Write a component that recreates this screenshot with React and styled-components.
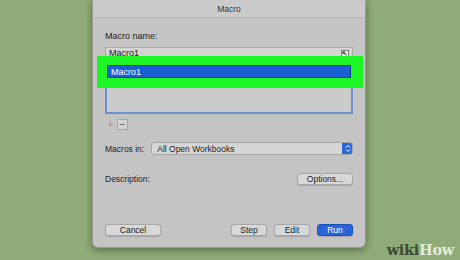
import styled, { createGlobalStyle } from 'styled-components';

const GlobalStyle = createGlobalStyle`
	html, body {
		margin: 0;
		padding: 0;
		width: 460px;
		height: 260px;
		overflow: hidden;
		background-color: #8fab77;
		font-family: "Liberation Sans", Arial, sans-serif;
	}
`;

const Page = styled.div`
	position: relative;
	width: 460px;
	height: 260px;
	display: flex;
	align-items: flex-start;
	padding-left: 92px;
	box-sizing: border-box;
`;

const Dialog = styled.div`
	width: 274px;
	height: 248px;
	background-color: #c4c4c4;
	border: 1px solid #9a9a9a;
	border-top: 0;
	border-radius: 0 0 6px 6px;
	box-shadow: 0 2px 7px rgba(20, 30, 10, 0.45);
	display: flex;
	flex-direction: column;
	box-sizing: border-box;
	color: #1e1e1e;
	font-size: 8.5px;
`;

const TitleBar = styled.div`
	height: 17px;
	background-color: #cbcbcb;
	border-bottom: 1px solid #b0b0b0;
	display: flex;
	align-items: center;
	justify-content: center;
	color: #333;
	font-size: 8.5px;
`;

const Body = styled.div`
	flex: 1;
	display: flex;
	flex-direction: column;
	padding: 0 12px 0 12px;
`;

const Label = styled.div`
	margin-top: ${props => props.top || 0}px;
	line-height: 10px;
	font-size: 9px;
`;

const Input = styled.div`
	margin-top: 6px;
	height: 12px;
	background-color: #d4d4d4;
	border: 1px solid #a9a9a9;
	box-sizing: border-box;
	display: flex;
	align-items: center;
	justify-content: space-between;
	padding: 0 3px;
	line-height: 10px;
	font-size: 9px;
`;

const ListBox = styled.div`
	position: relative;
	height: 55px;
	background-color: #cbcbcb;
	border: 2px solid #6f8fcf;
	border-top: 0;
	box-sizing: border-box;
`;

const Highlight = styled.div`
	position: absolute;
	left: -10px;
	right: -12px;
	top: -3px;
	height: 32px;
	background-color: #1ef524;
	padding: 9px 12px 9px 10px;
	box-sizing: border-box;
`;

const SelectedRow = styled.div`
	height: 13px;
	background-color: #1b5fd4;
	border: 1px solid #0f3f9a;
	color: #fff;
	display: flex;
	align-items: center;
	padding-left: 3px;
	box-sizing: border-box;
	font-size: 9px;
`;

const AddRemove = styled.div`
	display: flex;
	margin-top: 5px;
	gap: 1px;
`;

const SmallBtn = styled.div`
	width: 11px;
	height: 11px;
	display: flex;
	align-items: center;
	justify-content: center;
	color: ${props => props.disabled ? '#9c9c9c' : '#555'};
	background-color: ${props => props.disabled ? 'transparent' : '#d2d2d2'};
	border: 1px solid ${props => props.disabled ? 'transparent' : '#a6a6a6'};
	box-sizing: border-box;
	font-size: 10px;
	line-height: 10px;
`;

const Row = styled.div`
	display: flex;
	align-items: center;
	justify-content: space-between;
	margin-top: ${props => props.top}px;
	gap: 7px;
`;

const Popup = styled.div`
	flex: 1;
	height: 13px;
	background-color: #d6d6d6;
	border: 1px solid #a6a6a6;
	border-radius: 3px;
	box-sizing: border-box;
	display: flex;
	align-items: center;
	justify-content: space-between;
	padding-left: 5px;
	overflow: hidden;
`;

const Stepper = styled.div`
	width: 11px;
	height: 13px;
	margin-right: -1px;
	background-color: #2b66d9;
	display: flex;
	align-items: center;
	justify-content: center;
	border-radius: 0 3px 3px 0;
`;

const Button = styled.div`
	width: ${props => props.width}px;
	height: 12px;
	box-sizing: border-box;
	border-radius: 3px;
	display: flex;
	align-items: center;
	justify-content: center;
	background-color: ${props => props.primary ? '#2a63d8' : '#d8d8d8'};
	border: 1px solid ${props => props.primary ? '#1d4fb8' : '#a7a7a7'};
	color: ${props => props.primary ? '#fff' : '#222'};
	box-shadow: 0 1px 1px rgba(0, 0, 0, 0.15);
`;

const Spacer = styled.div`
	flex: 1;
`;

const ButtonBar = styled.div`
	display: flex;
	align-items: center;
	margin-bottom: 11px;
	gap: 7px;
`;

const Logo = styled.div`
	position: absolute;
	right: 6px;
	bottom: 2px;
	font-family: "DejaVu Serif", "Liberation Serif", serif;
	font-weight: bold;
	font-size: 14.5px;
	letter-spacing: -0.3px;
	color: #3d4a36;
`;

const LogoHow = styled.span`
	color: #e6ecdc;
`;

function PickerIcon() {
	return (
		<svg width="8" height="7" viewBox="0 0 8 7">
			<rect x="0.5" y="0.5" width="7" height="6" fill="#e8e8e8" stroke="#666" strokeWidth="0.8" />
			<path d="M2 2 L5.5 5 M2 2 L2 4 M2 2 L4 2" stroke="#222" strokeWidth="1" fill="none" />
		</svg>
	);
}

function StepperIcon() {
	return (
		<svg width="6" height="9" viewBox="0 0 6 9">
			<path d="M1 3.5 L3 1.5 L5 3.5 M1 5.5 L3 7.5 L5 5.5" stroke="#fff" strokeWidth="1" fill="none" />
		</svg>
	);
}

export default function App() {
	return (
		<Page>
			<GlobalStyle />
			<Dialog>
				<TitleBar>Macro</TitleBar>
				<Body>
					<Label top={13}>Macro name:</Label>
					<Input>
						<span>Macro1</span>
						<PickerIcon />
					</Input>
					<ListBox>
						<Highlight>
							<SelectedRow>Macro1</SelectedRow>
						</Highlight>
					</ListBox>
					<AddRemove>
						<SmallBtn disabled>+</SmallBtn>
						<SmallBtn>−</SmallBtn>
					</AddRemove>
					<Row top={12}>
						<span>Macros in:</span>
						<Popup>
							<span>All Open Workbooks</span>
							<Stepper><StepperIcon /></Stepper>
						</Popup>
					</Row>
					<Row top={18}>
						<span>Description:</span>
						<Button width={56}>Options...</Button>
					</Row>
					<Spacer />
					<ButtonBar>
						<Button width={56}>Cancel</Button>
						<Spacer />
						<Button width={36}>Step</Button>
						<Button width={36}>Edit</Button>
						<Button width={36} primary>Run</Button>
					</ButtonBar>
				</Body>
			</Dialog>
			<Logo>wiki<LogoHow>How</LogoHow></Logo>
		</Page>
	);
}
